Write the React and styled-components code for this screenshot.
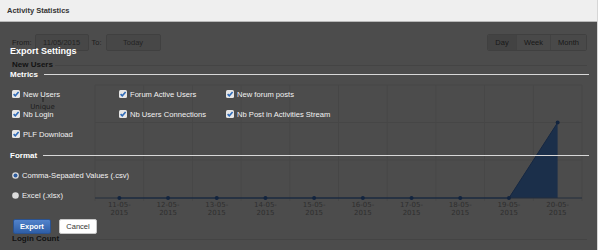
import React from 'react';
import styled, { createGlobalStyle } from 'styled-components';

const GlobalStyle = createGlobalStyle`
  html, body { margin: 0; padding: 0; background: #fff; }
  body { font-family: "Liberation Sans", Arial, sans-serif; }
`;

const Panel = styled.div`
  position: relative;
  width: 597px;
  height: 250px;
  border-right: 1px solid #d6d6d6;
  background: #fff;
  overflow: hidden;
`;

const Header = styled.div`
  height: 21px;
  border-bottom: 1px solid #b8b8b8;
  background: #efefef;
  display: flex;
  align-items: center;
  padding: 0 7px;
  font-size: 7.5px;
  font-weight: bold;
  color: #333;
`;

const Body = styled.div`
  display: flex;
  flex-direction: column;
  padding: 12px 10px 0 12px;
`;

const Toolbar = styled.div`
  display: flex;
  align-items: center;
  height: 17px;
`;

const Label = styled.span`
  font-size: 7.5px;
  color: #666;
  margin-right: ${p => p.gap || 3}px;
`;

const DateBox = styled.div`
  width: ${p => p.w}px;
  height: 15px;
  border: 1px solid #d6d6d6;
  border-radius: 2px;
  background: #efefef;
  display: flex;
  align-items: center;
  justify-content: center;
  font-size: 7.5px;
  color: #777;
  margin-right: 3px;
`;

const Spacer = styled.div`
  flex: 1;
`;

const Group = styled.div`
  display: flex;
  height: 17px;
  border: 1px solid #d8d8d8;
  border-radius: 2px;
  overflow: hidden;
  box-sizing: border-box;
`;

const GroupBtn = styled.div`
  width: ${p => p.w}px;
  display: flex;
  align-items: center;
  justify-content: center;
  font-size: 7.5px;
  color: #555;
  background: ${p => (p.active ? '#e2e2e2' : '#f6f6f6')};
  border-left: ${p => (p.first ? 'none' : '1px solid #dcdcdc')};
`;

const SectionTitle = styled.div`
  display: flex;
  align-items: center;
  height: 12px;
  margin-top: ${p => p.top}px;
  font-size: 8px;
  font-weight: bold;
  color: #444;
  &::after {
    content: '';
    flex: 1;
    height: 1px;
    margin: 2px 0 0 ${p => p.gap}px;
    background: #e4e4e4;
  }
`;

const ChartSvg = styled.svg`
  display: block;
  margin-left: -12px;
`;

const Overlay = styled.div`
  position: absolute;
  top: 22px;
  left: 0;
  right: 0;
  bottom: 0;
  background: rgba(0, 0, 0, 0.7);
`;

const Dialog = styled.div`
  position: absolute;
  top: 22px;
  left: 0;
  right: 0;
  padding: 23px 8px 0 10px;
  display: flex;
  flex-direction: column;
  color: #fff;
`;

const DialogTitle = styled.div`
  height: 12px;
  line-height: 12px;
  font-size: 9px;
  font-weight: bold;
`;

const Legend = styled.div`
  display: flex;
  align-items: center;
  height: 12px;
  margin-top: ${p => p.top}px;
  font-size: 8px;
  font-weight: bold;
  &::after {
    content: '';
    flex: 1;
    height: 1px;
    margin-left: 6px;
    background: #d8d8d8;
  }
`;

const Options = styled.div`
  display: grid;
  grid-template-columns: repeat(${p => p.cols}, ${p => (p.cols > 1 ? '107px' : 'auto')});
  justify-content: start;
  grid-auto-rows: 20px;
  margin-top: 4px;
  padding-left: 2px;
`;

const Option = styled.label`
  display: flex;
  align-items: center;
  gap: 3px;
  font-size: 7.6px;
  color: #f2f2f2;
  white-space: nowrap;
  svg { flex-shrink: 0; }
`;

const Actions = styled.div`
  display: flex;
  gap: 8px;
  margin-top: 14px;
  padding-left: 3px;
`;

const Button = styled.div`
  width: 38px;
  height: 15px;
  box-sizing: border-box;
  border-radius: 2px;
  display: flex;
  align-items: center;
  justify-content: center;
  font-size: 7.5px;
  font-weight: ${p => (p.primary ? 'bold' : 'normal')};
  color: ${p => (p.primary ? '#fff' : '#333')};
  border: 1px solid ${p => (p.primary ? '#2a5290' : '#c8c8c8')};
  background: ${p => (p.primary ? 'linear-gradient(#5283cc, #2e5ea6)' : '#fff')};
`;

const CheckIcon = () => (
  <svg width="8" height="8" viewBox="0 0 8 8">
    <rect x="0" y="0" width="8" height="8" rx="1.5" fill="#e6e6e6" />
    <path d="M1.6 4.1 L3.3 5.8 L6.6 2" fill="none" stroke="#2f6bb8" strokeWidth="1.6" />
  </svg>
);

const RadioIcon = ({ on }) => (
  <svg width="7" height="7" viewBox="0 0 7 7">
    <circle cx="3.5" cy="3.5" r="3.3" fill="#dcdcdc" />
    {on && <circle cx="3.5" cy="3.5" r="2" fill="#2d5c9e" />}
  </svg>
);

const dates = ['11', '12', '13', '14', '15', '16', '17', '18', '19', '20'];

function Chart() {
  const x0 = 95;
  const step = 48.7;
  const base = 128;
  const pts = dates.map((d, i) => [x0 + step / 2 + step * i, i === 9 ? 52.5 : base]);
  const last = pts[9];
  const prev = pts[8];
  return (
    <ChartSvg width="597" height="162" viewBox="0 0 597 162">
      {[15, 52.5, 90].map(y => (
        <line key={y} x1={x0} x2="582" y1={y} y2={y} stroke="#ececec" />
      ))}
      {Array.from({ length: 11 }, (_, i) => (
        <line key={i} x1={x0 + step * i} x2={x0 + step * i} y1="15" y2={base + 3} stroke="#ececec" />
      ))}
      <line x1="43" x2="43" y1="27" y2="32" stroke="#666" />
      <text x="42.5" y="39" fontSize="7" textAnchor="middle" fill="#666" fontFamily="DejaVu Sans, sans-serif">Unique</text>
      <polygon points={`${prev[0]},${base} ${last[0]},${last[1]} ${last[0]},${base}`} fill="#5d9df7" />
      <line x1={x0} x2="582" y1={base} y2={base} stroke="#7596c8" />
      <polyline points={pts.map(p => p.join(',')).join(' ')} fill="none" stroke="#4a83d8" />
      {pts.map((p, i) => (
        <circle key={i} cx={p[0]} cy={p[1]} r="2" fill="#3f78d0" />
      ))}
      {pts.map((p, i) => (
        <text key={i} x={p[0]} fontSize="7" textAnchor="middle" fill="#9c9c9c" fontFamily="DejaVu Sans, sans-serif">
          <tspan x={p[0]} y="137">{dates[i]}-05-</tspan>
          <tspan x={p[0]} y="145">2015</tspan>
        </text>
      ))}
    </ChartSvg>
  );
}

const metrics = [
  'New Users', 'Forum Active Users', 'New forum posts',
  'Nb Login', 'Nb Users Connections', 'Nb Post in Activities Stream',
  'PLF Download',
];

export default function App() {
  return (
    <>
      <GlobalStyle />
      <Panel>
        <Header>Activity Statistics</Header>
        <Body>
          <Toolbar>
            <Label>From:</Label>
            <DateBox w={52}>11/05/2015</DateBox>
            <Label gap={4}>To:</Label>
            <DateBox w={53}>Today</DateBox>
            <Spacer />
            <Group>
              <GroupBtn w={28} first active>Day</GroupBtn>
              <GroupBtn w={33}>Week</GroupBtn>
              <GroupBtn w={35}>Month</GroupBtn>
            </Group>
          </Toolbar>
          <SectionTitle top={7} gap={2}>New Users</SectionTitle>
          <Chart />
          <SectionTitle top={0} gap={7}>Login Count</SectionTitle>
        </Body>
        <Overlay />
        <Dialog>
          <DialogTitle>Export Settings</DialogTitle>
          <Legend top={11}>Metrics</Legend>
          <Options cols={3}>
            {metrics.map(m => (
              <Option key={m}><CheckIcon />{m}</Option>
            ))}
          </Options>
          <Legend top={5}>Format</Legend>
          <Options cols={1}>
            <Option><RadioIcon on />Comma-Sepaated Values (.csv)</Option>
            <Option><RadioIcon />Excel (.xlsx)</Option>
          </Options>
          <Actions>
            <Button primary>Export</Button>
            <Button>Cancel</Button>
          </Actions>
        </Dialog>
      </Panel>
    </>
  );
}
